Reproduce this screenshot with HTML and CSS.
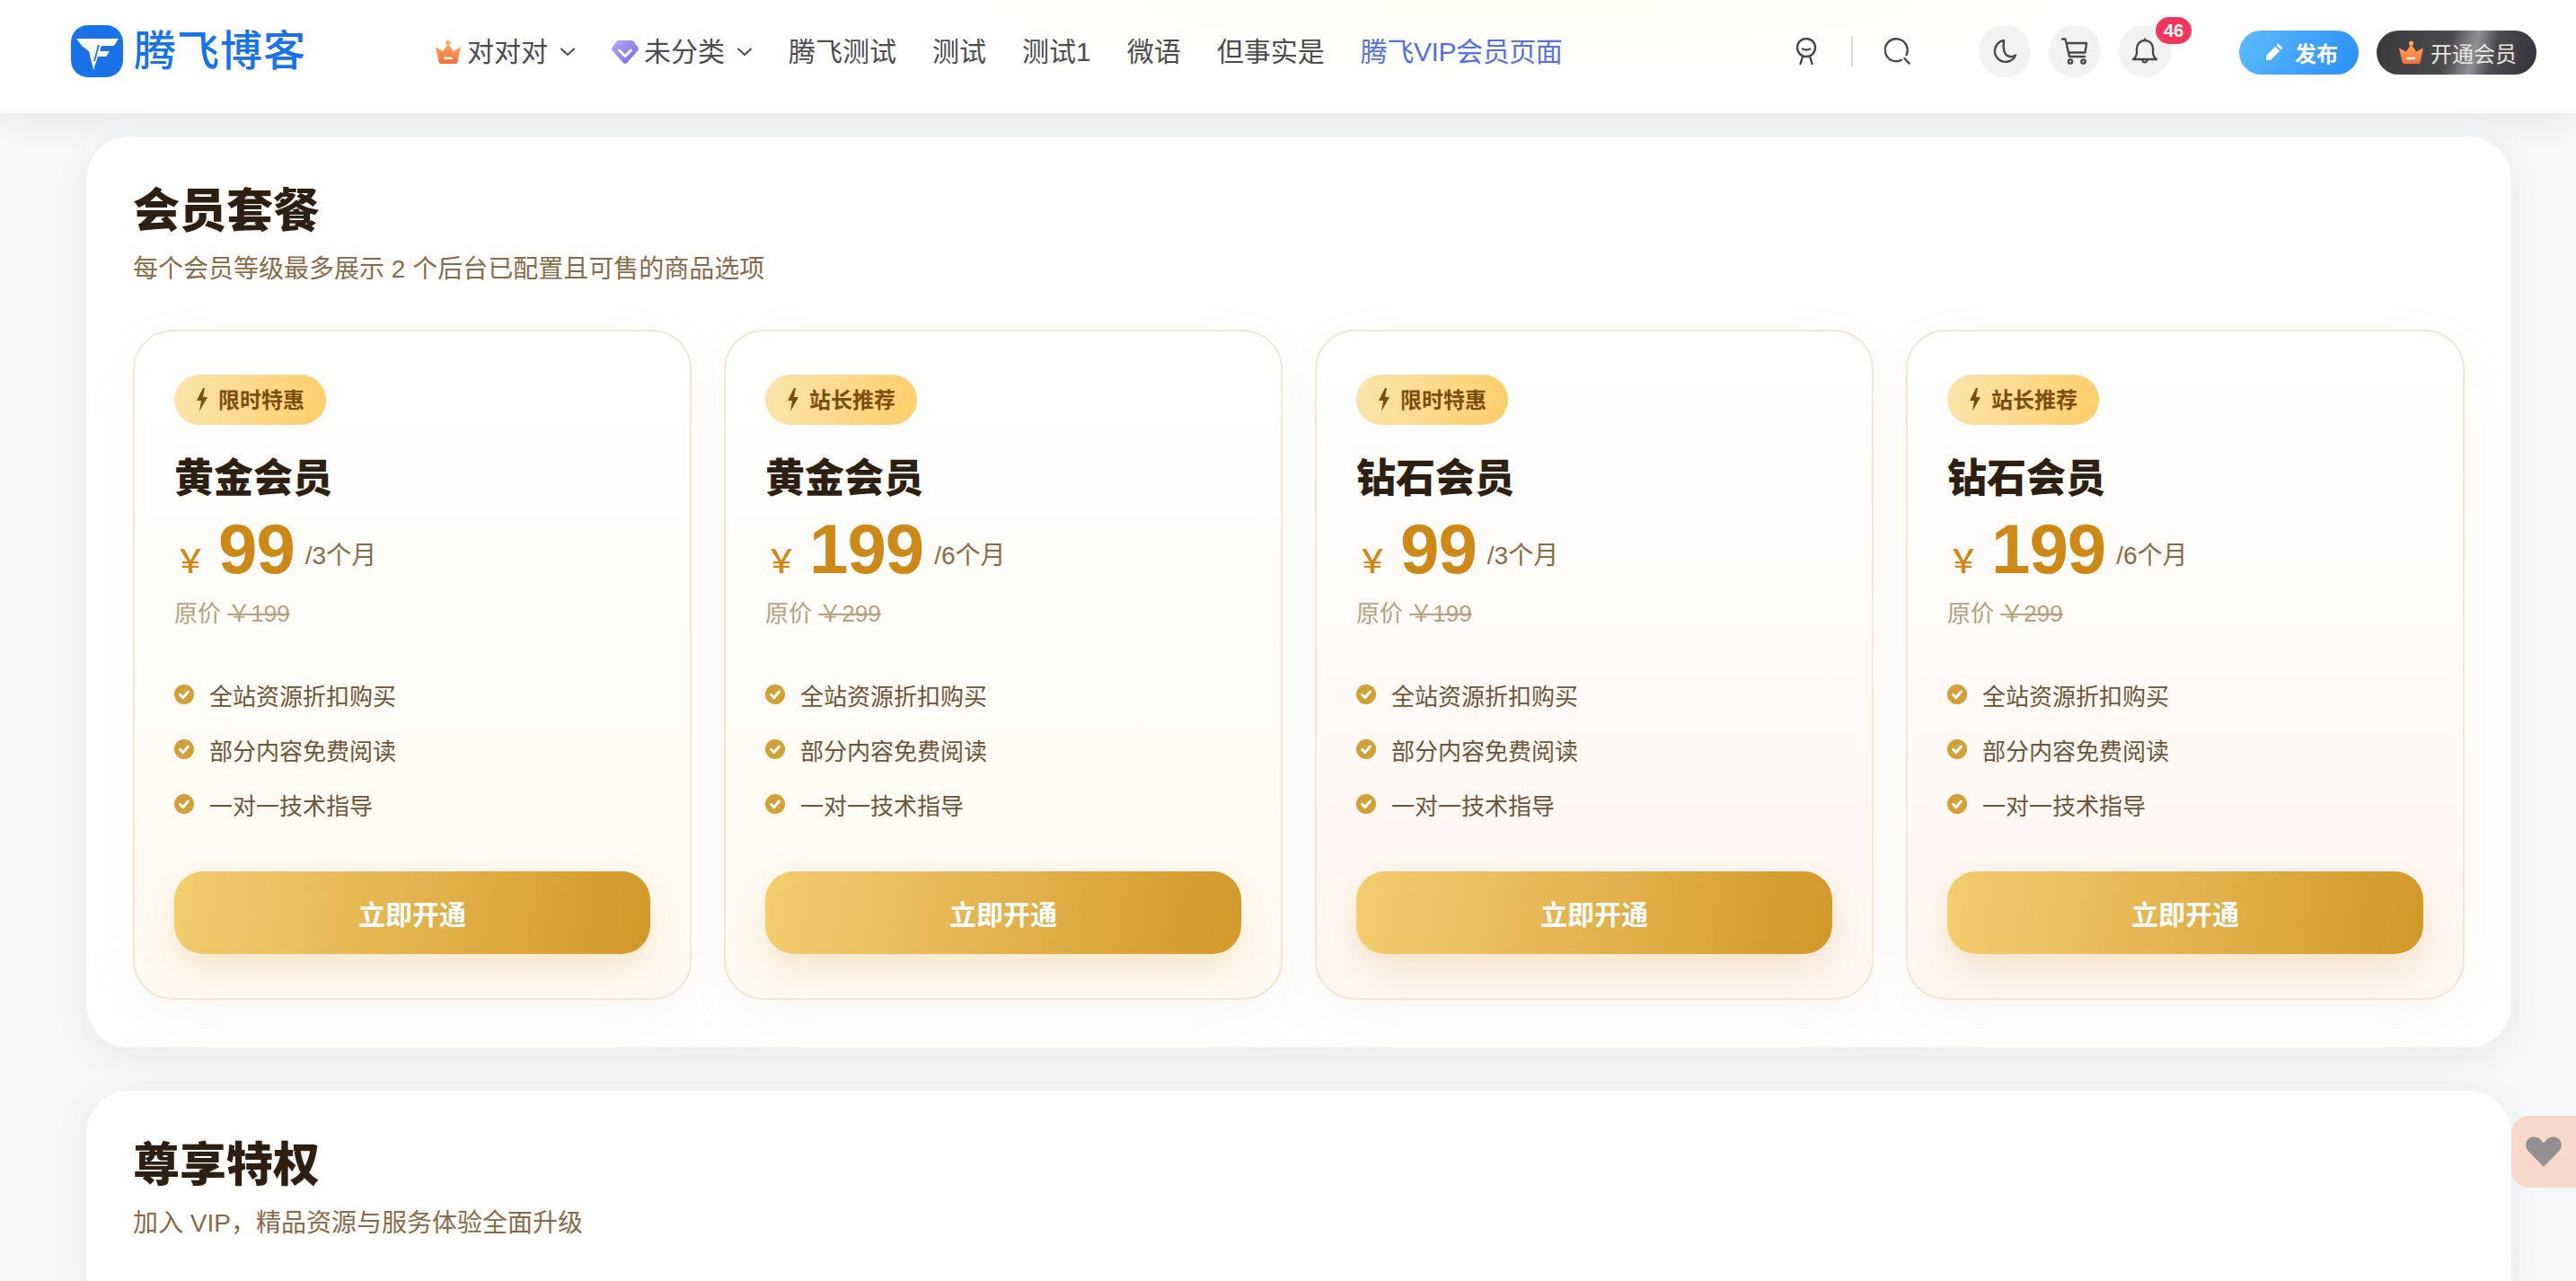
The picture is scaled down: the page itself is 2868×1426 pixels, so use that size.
FILE: index.html
```html
<!DOCTYPE html>
<html lang="zh-CN">
<head>
  <meta charset="UTF-8">
  <title>腾飞VIP会员页面</title>
  <link rel="stylesheet" href="styles.css">
</head>
<body>

<svg class="defs" width="0" height="0" aria-hidden="true">
  <defs>
    <linearGradient id="crownFill" x1="0" y1="0" x2="0" y2="1">
      <stop offset="0" stop-color="#ffa55c"/>
      <stop offset="1" stop-color="#f4703a"/>
    </linearGradient>
    <linearGradient id="gemFill" x1="0" y1="0" x2="1" y2="1">
      <stop offset="0" stop-color="#b5aaf6"/>
      <stop offset="1" stop-color="#7563e6"/>
    </linearGradient>
    <symbol id="crown" viewBox="0 0 30 28">
      <circle cx="15" cy="3.5" r="2.6" fill="#ffa55c"/>
      <path d="M15 5 21 13 29 8.500 25.500 25Q25.300 27 23 27H7Q4.700 27 4.500 25L1 8.500 9 13Z" fill="url(#crownFill)"/>
      <rect x="10" y="19.500" width="10" height="2.600" rx="1" fill="#fff"/>
    </symbol>
    <symbol id="bolt" viewBox="0 0 14 28">
      <path d="M8 1 1 15H6L4 27 13 11H8L10 1Z" fill="currentColor"/>
    </symbol>
    <symbol id="check" viewBox="0 0 22 22">
      <circle cx="11" cy="11" r="11" fill="#d29f38"/>
      <path d="M6.500 11.300 9.800 14.600 15.500 8" fill="none" stroke="#fff" stroke-width="3" stroke-linecap="round" stroke-linejoin="round"/>
    </symbol>
  </defs>
</svg>

<header class="topbar">
  <a class="logo">
    <svg class="logo-mark" viewBox="0 0 58 58">
      <rect width="58" height="58" rx="19" fill="#1a73e6"/>
      <path d="M6 15H53L48 23H34L32 29H43L39 35H30L25 50 20 29 12 23Z" fill="#fff"/>
      <path d="M31 22 26 40" stroke="#1a73e6" stroke-width="1.800" fill="none"/>
    </svg>
    <span class="logo-text">腾飞博客</span>
  </a>

  <nav class="nav">
    <a class="nav-item">
      <svg class="nav-ico"><use href="#crown"/></svg>对对对
      <svg class="chev" viewBox="0 0 18 10"><path d="M2 1.500 9 8 16 1.500" fill="none" stroke="#4c4c50" stroke-width="2" stroke-linecap="round" stroke-linejoin="round"/></svg>
    </a>
    <a class="nav-item">
      <svg class="nav-ico" viewBox="0 0 30 28">
        <path d="M8 1H22Q23.500 1 24.500 2L29.500 9Q30.500 11 29 12.500L17 26Q15 28 13 26L1 12.500Q-.500 11 .500 9L5.500 2Q6.500 1 8 1Z" fill="url(#gemFill)"/>
        <path d="M8.500 12 15 18.500 21.500 12" fill="none" stroke="#fff" stroke-width="3" stroke-linecap="round" stroke-linejoin="round"/>
      </svg>未分类
      <svg class="chev" viewBox="0 0 18 10"><path d="M2 1.500 9 8 16 1.500" fill="none" stroke="#4c4c50" stroke-width="2" stroke-linecap="round" stroke-linejoin="round"/></svg>
    </a>
    <a class="nav-item">腾飞测试</a>
    <a class="nav-item">测试</a>
    <a class="nav-item">测试1</a>
    <a class="nav-item">微语</a>
    <a class="nav-item">但事实是</a>
    <a class="nav-item active">腾飞VIP会员页面</a>
  </nav>

  <div class="tools">
    <svg class="plain-ico user-ico" viewBox="0 0 26 30" fill="none" stroke="#48484c" stroke-width="2.400" stroke-linecap="round">
      <circle cx="13" cy="11" r="10"/>
      <path d="M9 12.500Q13 14.500 17 12.500"/>
      <path d="M9 21 6.500 29M17 21 19.500 29"/>
    </svg>
    <span class="divider"></span>
    <svg class="plain-ico search-ico" viewBox="0 0 29 30" fill="none" stroke="#48484c" stroke-width="2.400" stroke-linecap="round">
      <path d="M19 24.800A12.500 12.500 0 1 1 24.500 19"/>
      <path d="M22.500 23 27.500 28.500"/>
    </svg>

    <a class="round-btn first">
      <svg viewBox="0 0 30 30" fill="none" stroke="#48484c" stroke-width="2.400" stroke-linejoin="round"><path d="M14 3A12 12 0 1 0 27 19.500Q24 21.500 21 21 12 20 14 3Z"/></svg>
    </a>
    <a class="round-btn">
      <svg viewBox="0 0 30 30" fill="none" stroke="#48484c" stroke-width="2.300" stroke-linecap="round" stroke-linejoin="round">
        <path d="M1 1.500H4.500L9 21H26"/>
        <path d="M6 6H28L26.500 16.500H8"/>
        <circle cx="10" cy="26.500" r="2.200"/>
        <circle cx="24.500" cy="26.500" r="2.200"/>
      </svg>
    </a>
    <a class="round-btn">
      <svg viewBox="0 0 30 30" fill="none" stroke="#48484c" stroke-width="2.300" stroke-linecap="round" stroke-linejoin="round">
        <path d="M2 24H28Q24 21 24 16V12A9 9 0 0 0 6 12V16Q6 21 2 24Z"/>
        <path d="M15 3V1.500M12.500 25.500A2.600 2.600 0 0 0 17.500 25.500"/>
      </svg>
      <span class="count">46</span>
    </a>

    <a class="pill publish">
      <svg class="pill-ico" viewBox="0 0 22 22"><path d="M15.500 1.500 20.500 6.500 18.500 8.500 13.500 3.500ZM12.200 4.800 17.200 9.800 7 20H2V15Z" fill="#fff"/></svg>发布
    </a>
    <a class="pill vip">
      <svg class="pill-crown"><use href="#crown"/></svg>开通会员
    </a>
  </div>
</header>

<main class="page">
  <section class="panel">
    <h2 class="panel-title">会员套餐</h2>
    <p class="panel-sub">每个会员等级最多展示 2 个后台已配置且可售的商品选项</p>

    <div class="plans">
      <article class="plan gold">
        <span class="tag"><svg class="bolt"><use href="#bolt"/></svg>限时特惠</span>
        <h3 class="plan-name">黄金会员</h3>
        <div class="price"><span class="yen">&#xFFE5;</span><span class="num">99</span><span class="term">/3个月</span></div>
        <div class="was">原价 <s>&#xFFE5;199</s></div>
        <ul class="perks">
          <li><svg class="tick"><use href="#check"/></svg>全站资源折扣购买</li>
          <li><svg class="tick"><use href="#check"/></svg>部分内容免费阅读</li>
          <li><svg class="tick"><use href="#check"/></svg>一对一技术指导</li>
        </ul>
        <button class="buy">立即开通</button>
      </article>

      <article class="plan gold">
        <span class="tag"><svg class="bolt"><use href="#bolt"/></svg>站长推荐</span>
        <h3 class="plan-name">黄金会员</h3>
        <div class="price"><span class="yen">&#xFFE5;</span><span class="num">199</span><span class="term">/6个月</span></div>
        <div class="was">原价 <s>&#xFFE5;299</s></div>
        <ul class="perks">
          <li><svg class="tick"><use href="#check"/></svg>全站资源折扣购买</li>
          <li><svg class="tick"><use href="#check"/></svg>部分内容免费阅读</li>
          <li><svg class="tick"><use href="#check"/></svg>一对一技术指导</li>
        </ul>
        <button class="buy">立即开通</button>
      </article>

      <article class="plan diamond">
        <span class="tag"><svg class="bolt"><use href="#bolt"/></svg>限时特惠</span>
        <h3 class="plan-name">钻石会员</h3>
        <div class="price"><span class="yen">&#xFFE5;</span><span class="num">99</span><span class="term">/3个月</span></div>
        <div class="was">原价 <s>&#xFFE5;199</s></div>
        <ul class="perks">
          <li><svg class="tick"><use href="#check"/></svg>全站资源折扣购买</li>
          <li><svg class="tick"><use href="#check"/></svg>部分内容免费阅读</li>
          <li><svg class="tick"><use href="#check"/></svg>一对一技术指导</li>
        </ul>
        <button class="buy">立即开通</button>
      </article>

      <article class="plan diamond">
        <span class="tag"><svg class="bolt"><use href="#bolt"/></svg>站长推荐</span>
        <h3 class="plan-name">钻石会员</h3>
        <div class="price"><span class="yen">&#xFFE5;</span><span class="num">199</span><span class="term">/6个月</span></div>
        <div class="was">原价 <s>&#xFFE5;299</s></div>
        <ul class="perks">
          <li><svg class="tick"><use href="#check"/></svg>全站资源折扣购买</li>
          <li><svg class="tick"><use href="#check"/></svg>部分内容免费阅读</li>
          <li><svg class="tick"><use href="#check"/></svg>一对一技术指导</li>
        </ul>
        <button class="buy">立即开通</button>
      </article>
    </div>
  </section>

  <section class="panel panel-rest">
    <h2 class="panel-title">尊享特权</h2>
    <p class="panel-sub">加入 VIP，精品资源与服务体验全面升级</p>
  </section>
</main>

<a class="float-like">
  <svg viewBox="0 0 40 34"><path d="M20 34 3 16.500C-1 12 -.500 5.500 3.500 2.500 8 -1 14 .500 17 4L20 7.500 23 4C26 .500 32 -1 36.500 2.500 40.500 5.500 41 12 37 16.500Z" fill="#8f8f8f"/></svg>
</a>

</body>
</html>
```

FILE: styles.css
```css
* {
  box-sizing: border-box;
}
html, body {
  margin: 0;
  height: 100%;
  overflow: hidden;
}
body {
  font-family: "Liberation Sans", "Noto Sans CJK SC", sans-serif;
  background-color: #f5f6f8;
  color: #2f1f10;
}
.defs {
  position: absolute;
}

/* top bar */
.topbar {
  position: relative;
  z-index: 2;
  display: flex;
  align-items: center;
  height: 126px;
  padding: 0 44px 12px 79px;
  background: radial-gradient(ellipse 900px 110px at 1700px 0, #fffef6, #ffffff);
  box-shadow: 0 6px 40px rgba(0, 0, 0, 0.06);
}
.logo {
  display: flex;
  align-items: center;
  width: 405px;
  flex: none;
}
.logo-mark {
  width: 58px;
  height: 58px;
}
.logo-text {
  margin-left: 12px;
  font-size: 47px;
  font-weight: 500;
  letter-spacing: 1px;
  line-height: 58px;
  color: #1a73e6;
}
.nav {
  display: flex;
  align-items: center;
  gap: 40px;
  margin-top: 2px;
  font-size: 30px;
  line-height: 40px;
  color: #4c4c50;
}
.nav-item {
  display: flex;
  align-items: center;
  white-space: nowrap;
}
.nav-item.active {
  color: #5570de;
  letter-spacing: -0.4px;
}
.nav-ico {
  width: 30px;
  height: 28px;
  margin-right: 6px;
}
.chev {
  width: 18px;
  height: 10px;
  margin-left: 13px;
}
.tools {
  display: flex;
  align-items: center;
  margin-left: auto;
}
.plain-ico {
  height: 30px;
}
.user-ico {
  width: 26px;
}
.search-ico {
  width: 29px;
}
.divider {
  width: 2px;
  height: 34px;
  margin: 0 35px 0 37px;
  background-color: #dcdcdc;
}
.round-btn {
  position: relative;
  display: flex;
  align-items: center;
  justify-content: center;
  width: 58px;
  height: 58px;
  margin-left: 20px;
  border-radius: 50%;
  background-color: #f2f2f1;
}
.round-btn.first {
  margin-left: 76px;
}
.round-btn svg {
  width: 30px;
  height: 30px;
}
.count {
  position: absolute;
  top: -9px;
  left: 41px;
  width: 40px;
  height: 30px;
  border-radius: 15px;
  background-color: #f5365c;
  color: #fff;
  font-size: 20px;
  font-weight: 700;
  line-height: 30px;
  text-align: center;
}
.pill {
  display: flex;
  align-items: center;
  height: 49px;
  margin-top: 2px;
  margin-left: 20px;
  border-radius: 25px;
  font-size: 24px;
  white-space: nowrap;
}
.publish {
  width: 133px;
  margin-left: 76px;
  padding-left: 28px;
  background: linear-gradient(120deg, #5cbcff, #2a8ef5);
  color: #fff;
  font-weight: 700;
}
.pill-ico {
  width: 22px;
  height: 22px;
  margin-right: 12px;
}
.vip {
  width: 178px;
  padding-left: 24px;
  background: linear-gradient(105deg, #3a3a3d 0%, #4b4b4e 45%, #929296 60%, #4a4a4f 72%, #313137 100%);
  color: #ebe6e2;
}
.pill-crown {
  width: 29px;
  height: 27px;
  margin-right: 7px;
}

/* page body */
.page {
  padding: 26px 72px 0 96px;
}
.panel {
  padding: 48px 52px 53px;
  border-radius: 48px;
  background-color: #fff;
  box-shadow: 0 8px 48px rgba(60, 40, 20, 0.05);
}
.panel-rest {
  height: 213px;
  margin-top: 48px;
  border-radius: 48px 48px 0 0;
}
.panel-title {
  margin: 0;
  font-size: 52px;
  line-height: 70px;
  font-weight: 900;
  color: #2f1f10;
}
.panel-sub {
  margin: 10px 0 0;
  font-size: 28px;
  line-height: 40px;
  color: #8a6a45;
}
.plans {
  display: grid;
  grid-template-columns: repeat(4, 622px);
  gap: 36px;
  margin-top: 47px;
}
.plan {
  display: flex;
  flex-direction: column;
  align-items: flex-start;
  height: 746px;
  padding: 48px 44px 49px;
  border: 2px solid #f4e6d0;
  border-radius: 44px;
  box-shadow: 0 20px 60px rgba(205, 160, 100, 0.07);
}
.plan.gold {
  background: linear-gradient(180deg, #ffffff, #fffaf1);
}
.plan.diamond {
  background: linear-gradient(180deg, #ffffff, #fff6f1);
}
.tag {
  display: flex;
  align-items: center;
  height: 56px;
  padding: 0 24px 4px;
  border-radius: 28px;
  background: linear-gradient(100deg, #fde4ae, #fdcf68);
  color: #7a4e0c;
  font-size: 24px;
  font-weight: 700;
}
.bolt {
  width: 14px;
  height: 28px;
  margin: 4px 11px 0 0;
}
.plan-name {
  margin: 30px 0 0;
  font-size: 44px;
  line-height: 60px;
  font-weight: 900;
  color: #2f1f10;
}
.price {
  display: flex;
  align-items: baseline;
  height: 80px;
  margin-top: 8px;
  line-height: 80px;
}
.yen {
  margin-right: 13px;
  font-size: 36px;
  font-weight: 500;
  color: #cc8918;
}
.num {
  font-size: 78px;
  font-weight: 700;
  letter-spacing: -1px;
  color: #cc8918;
}
.term {
  align-self: center;
  margin: 16px 0 0 12px;
  font-size: 28px;
  line-height: 40px;
  color: #8a6a45;
}
.was {
  margin-top: 14px;
  font-size: 26px;
  line-height: 36px;
  color: #b99f7b;
}
.perks {
  margin: 52px 0 0;
  padding: 0;
  list-style: none;
}
.perks li {
  display: flex;
  align-items: center;
  height: 40px;
  margin-bottom: 21px;
  font-size: 26px;
  color: #6f5334;
}
.tick {
  width: 22px;
  height: 22px;
  margin-right: 17px;
}
.buy {
  width: 530px;
  height: 92px;
  margin-top: auto;
  border: 0;
  border-radius: 32px;
  background: linear-gradient(100deg, #f3cd6f, #d1982b);
  box-shadow: 0 16px 40px rgba(210, 155, 60, 0.22);
  color: #fff;
  font-family: inherit;
  font-size: 30px;
  font-weight: 700;
}

/* side tab */
.float-like {
  position: fixed;
  top: 1242px;
  right: 0;
  display: flex;
  align-items: center;
  justify-content: center;
  width: 72px;
  height: 80px;
  border-radius: 20px 0 0 20px;
  background-color: #f7d8cb;
}
.float-like svg {
  width: 40px;
  height: 34px;
}
```
